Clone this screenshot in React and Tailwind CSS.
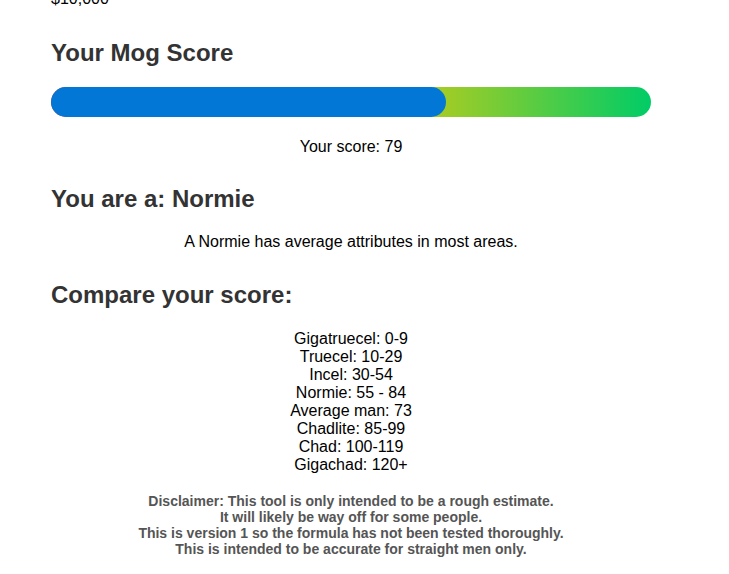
export default function App() {
    const score = 79;
    const ranks = [
        "Gigatruecel: 0-9",
        "Truecel: 10-29",
        "Incel: 30-54",
        "Normie: 55 - 84",
        "Average man: 73",
        "Chadlite: 85-99",
        "Chad: 100-119",
        "Gigachad: 120+",
    ];

    return (
        <div className="min-h-screen bg-white overflow-hidden font-['Liberation_Sans',Arial,sans-serif] text-black">
            <div className="ml-[51px] w-[600px]">
                <p className="-mt-[10px] text-[16px] leading-[18px]">$10,000</p>

                <h2 className="mt-[31px] text-[24px] leading-[28px] font-bold text-[#333]">Your Mog Score</h2>

                <div className="mt-[20px] h-[30px] rounded-full bg-[linear-gradient(to_right,#ff3b30_0%,#ffcc00_45%,#00cc66_100%)]">
                    <div className="h-full w-[395px] rounded-full bg-[#0277d6]"></div>
                </div>

                <p className="mt-[21px] text-center text-[16px] leading-[18px]">Your score: {score}</p>

                <h2 className="mt-[29px] text-[24px] leading-[28px] font-bold text-[#333]">You are a: Normie</h2>

                <p className="mt-[20px] text-center text-[16px] leading-[18px]">
                    A Normie has average attributes in most areas.
                </p>

                <h2 className="mt-[30px] text-[24px] leading-[28px] font-bold text-[#333]">Compare your score:</h2>

                <div className="mt-[21px] flex flex-col items-center text-[16px] leading-[18px]">
                    {ranks.map((r) => (
                        <div key={r}>{r}</div>
                    ))}
                </div>

                <div className="mt-[19px] text-center text-[14px] leading-[16px] font-bold text-[#555]">
                    <div>Disclaimer: This tool is only intended to be a rough estimate.</div>
                    <div>It will likely be way off for some people.</div>
                    <div>This is version 1 so the formula has not been tested thoroughly.</div>
                    <div>This is intended to be accurate for straight men only.</div>
                </div>
            </div>
        </div>
    );
}
